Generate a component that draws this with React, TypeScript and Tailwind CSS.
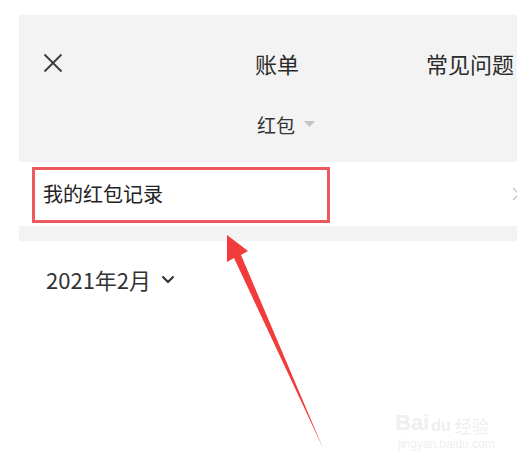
import React from "react";

export default function App() {
  const font = { fontFamily: '"Noto Sans CJK SC", "Noto Sans", sans-serif' };
  return (
    <div className="relative w-[517px] h-[469px] bg-white overflow-hidden" style={font}>
      <div className="pt-[15px] pl-[19px]">
        {/* header */}
        <div className="h-[147px] bg-[#f3f3f3] flex flex-col">
          <div className="h-[94px] flex items-center pt-[1px]">
            <svg width="20" height="20" viewBox="0 0 20 20" className="ml-[24px] shrink-0">
              <path d="M1.5 1.5 L18.5 18.5 M18.5 1.5 L1.5 18.5" stroke="#3a3a3a" strokeWidth="1.8" fill="none" />
            </svg>
            <span className="ml-[192px] text-[22px] leading-none text-[#2b2b2b] whitespace-nowrap shrink-0">账单</span>
            <span className="ml-[127px] text-[22px] leading-none text-[#2b2b2b] whitespace-nowrap shrink-0">常见问题</span>
          </div>
          <div className="flex items-center pl-[238px] h-[30px]">
            <span className="text-[19px] leading-none text-[#333]">红包</span>
            <svg width="11" height="6" viewBox="0 0 11 6" className="ml-[9px]">
              <path d="M0 0 L11 0 L5.5 6 Z" fill="#c4c4c4" />
            </svg>
          </div>
        </div>
        {/* record row */}
        <div className="h-[64px] bg-white flex items-center justify-between">
          <span className="ml-[24px] text-[20px] leading-none text-[#222]">我的红包记录</span>
          <svg width="8" height="14" viewBox="0 0 8 14" className="mr-[-3px]">
            <path d="M1 1 L7 7 L1 13" stroke="#c8c8c8" strokeWidth="1.5" fill="none" />
          </svg>
        </div>
        <div className="h-[15px] bg-[#f3f3f3]" />
        {/* date */}
        <div className="h-[75px] flex items-center pl-[27px]">
          <span className="text-[22px] leading-none text-[#333]">2021年2月</span>
          <svg width="14" height="9" viewBox="0 0 14 9" className="ml-[10px] mt-[2px]">
            <path d="M1.5 1.5 L7 7 L12.5 1.5" stroke="#333" strokeWidth="2.2" fill="none" />
          </svg>
        </div>
      </div>

      {/* red highlight box */}
      <div className="absolute left-[32px] top-[167px] w-[298px] h-[56px] border-[3px] border-[#ec5a60]" />

      {/* arrow */}
      <svg className="absolute left-0 top-0" width="517" height="469" viewBox="0 0 517 469">
        <polygon points="227,235 248,251 241,255 323,448 234,258 227,262" fill="#f23b3b" />
      </svg>

      {/* watermark */}
      <div className="absolute left-[395px] top-[412px] flex flex-col items-start text-[#efefef] select-none">
        <div className="flex items-end leading-none">
          <span className="text-[22px] font-bold" style={{ fontFamily: '"Liberation Sans", sans-serif' }}>Bai</span>
          <span className="text-[16px] font-bold ml-[2px]" style={{ fontFamily: '"Liberation Sans", sans-serif' }}>du</span>
          <span className="text-[17px] ml-[4px]">经验</span>
        </div>
        <span className="text-[12px] leading-none mt-[4px] ml-[3px]" style={{ fontFamily: '"Liberation Sans", sans-serif' }}>jingyan.baidu.com</span>
      </div>
    </div>
  );
}
